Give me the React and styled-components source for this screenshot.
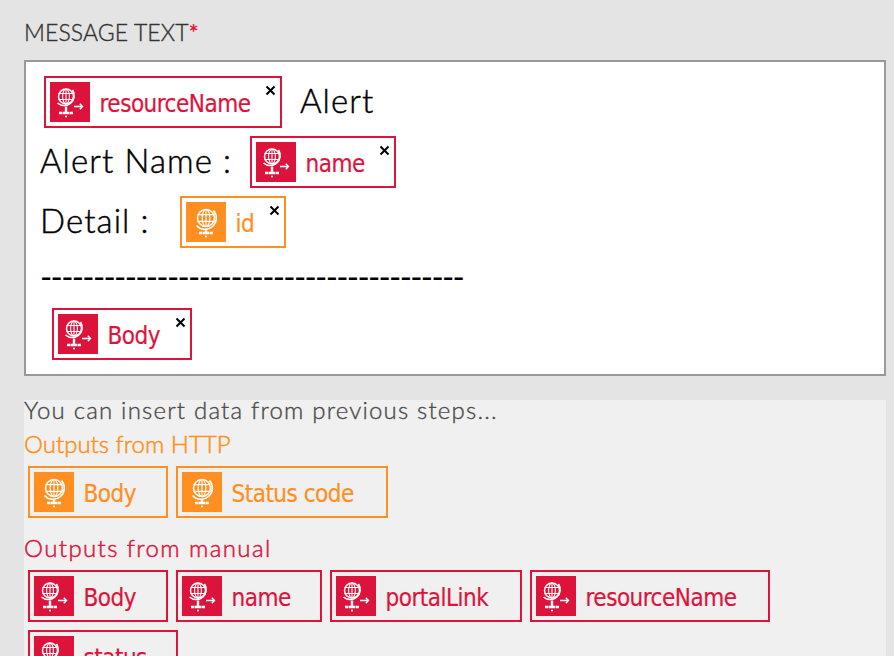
import React from "react";
import styled, { createGlobalStyle } from "styled-components";

const CRIMSON = "#dc143c";
const ORANGE = "#ff8f20";

const Global = createGlobalStyle`
  html, body { margin: 0; padding: 0; height: 100%; overflow: hidden; background: #e4e4e4; }
`;

const Page = styled.div`
  width: 894px;
  height: 656px;
  overflow: hidden;
  box-sizing: border-box;
  padding: 16px 8px 0 24px;
  font-family: "Lato", sans-serif;
`;

const FieldLabel = styled.div`
  font-size: 23px;
  line-height: 32px;
  height: 44px;
  color: #333;
  font-weight: 300;
  letter-spacing: 0.1px;
  -webkit-text-stroke: 0.35px #333;
  b { color: #f01030; font-weight: 700; -webkit-text-stroke: 0; }
`;

const Editor = styled.div`
  box-sizing: border-box;
  height: 316px;
  border: 2px solid #999;
  background: #fff;
  padding: 14px;
  display: flex;
  flex-direction: column;
  gap: 8px;
`;

const Line = styled.div`
  display: flex;
  align-items: center;
  height: 52px;
  flex: none;
  padding-left: ${(p) => p.$indent || 0}px;
  font-size: 33px;
  font-weight: 300;
  letter-spacing: 1.1px;
  color: #000;
  white-space: pre;
`;

const DashLine = styled.div`
  height: 44px;
  flex: none;
  line-height: 40px;
  font-size: 33px;
  font-weight: 400;
  letter-spacing: -1.68px;
  color: #000;
  white-space: pre;
  overflow: hidden;
`;

const LineText = styled.span`
  width: ${(p) => p.$w}px;
  margin-left: ${(p) => p.$left || 0}px;
  flex: none;
  position: relative;
  top: -2px;
  -webkit-text-stroke: 0.45px #000;
`;

const Panel = styled.div`
  margin-top: 24px;
  background: #f0f0f0;
  height: 300px;
`;

const Hint = styled.div`
  font-size: 24px;
  font-weight: 300;
  line-height: 20px;
  letter-spacing: 1.2px;
  color: #4a4a4a;
  -webkit-text-stroke: 0.35px #4a4a4a;
`;

const GroupTitle = styled.div`
  font-size: 24px;
  font-weight: 300;
  line-height: 32px;
  color: ${(p) => p.$color};
  margin-top: ${(p) => p.$top}px;
  letter-spacing: ${(p) => p.$spacing}px;
  -webkit-text-stroke: 0.5px ${(p) => p.$color};
`;

const Tokens = styled.div`
  display: flex;
  flex-wrap: wrap;
  gap: 8px;
  padding: 6px 0 0 4px;
`;

const TokenBox = styled.div`
  position: relative;
  box-sizing: border-box;
  height: 52px;
  flex: none;
  display: flex;
  align-items: center;
  gap: 10px;
  padding: 4px 0 4px 4px;
  width: ${(p) => p.$w}px;
  border: 2px solid ${(p) => p.$color};
  color: ${(p) => p.$color};
  font-family: "DejaVu Sans Condensed", "DejaVu Sans", sans-serif;
  font-stretch: condensed;
  font-size: 24px;
  letter-spacing: -0.5px;
  -webkit-text-stroke: 0.2px ${(p) => p.$color};
`;

const IconTile = styled.span`
  width: 40px;
  height: 40px;
  flex: none;
  display: block;
  background: ${(p) => p.$color};
  svg { display: block; }
`;

const TokenLabel = styled.span`
  white-space: nowrap;
  margin-top: 4px;
  margin-left: -0.5px;
`;

const Close = styled.svg`
  position: absolute;
  right: 4px;
  top: 7px;
  width: 11px;
  height: 11px;
`;

const GlobeIcon = ({ arrow }) => {
  const cx = arrow ? 16 : 20;
  const cy = arrow ? 14.5 : 16;
  const r = arrow ? 7.5 : 8.5;
  return (
    <svg width="40" height="40" viewBox="0 0 40 40" fill="none" stroke="#fff">
      <circle cx={cx} cy={cy} r={r} strokeWidth="1.5" />
      <ellipse cx={cx} cy={cy} rx={r * 0.45} ry={r} strokeWidth="1.1" />
      <path
        d={`M${cx} ${cy - r}v${2 * r}M${cx - r} ${cy - r * 0.4}h${2 * r}M${cx - r} ${cy + r * 0.4}h${2 * r}`}
        strokeWidth="1.1"
      />
      <path
        d={`M${cx - r - 1} ${cy + r - 1}A${r + 2.5} ${r + 2.5} 0 0 0 ${cx + r - 1} ${cy - r + 1}`}
        strokeWidth="1.6"
      />
      <path d={`M${cx} ${cy + r + 2.5}V31`} strokeWidth="2.4" />
      <path d={`M${cx - 7} 31h3.5M${cx - 3} 31h6M${cx + 3.5} 31h3.5`} strokeWidth="2.6" />
      <path d={`M${cx - 1} 34.5h2`} strokeWidth="1.4" />
      {arrow && <path d="M24 24.5h8.5M29.8 21.8l2.700 2.700-2.700 2.700" strokeWidth="1.4" />}
    </svg>
  );
};

const Token = ({ color, w, label, arrow = true, closable }) => (
  <TokenBox $color={color} $w={w}>
    <IconTile $color={color}>
      <GlobeIcon arrow={arrow} />
    </IconTile>
    <TokenLabel>{label}</TokenLabel>
    {closable && (
      <Close viewBox="0 0 11 11">
        <path d="M1.5 1.5l8 8M9.5 1.5l-8 8" stroke="#000" strokeWidth="2" />
      </Close>
    )}
  </TokenBox>
);

export default function App() {
  return (
    <Page>
      <Global />
      <FieldLabel>
        MESSAGE TEXT<b>*</b>
      </FieldLabel>
      <Editor>
        <Line $indent={4}>
          <Token color={CRIMSON} w={238} label="resourceName" closable />
          <LineText $w={100} $left={18}>Alert</LineText>
        </Line>
        <Line>
          <LineText $w={210}>Alert Name :</LineText>
          <Token color={CRIMSON} w={146} label="name" closable />
        </Line>
        <Line>
          <LineText $w={140}>Detail :</LineText>
          <Token color={ORANGE} w={106} label="id" arrow={false} closable />
        </Line>
        <DashLine>----------------------------------------</DashLine>
        <Line $indent={12}>
          <Token color={CRIMSON} w={140} label="Body" closable />
        </Line>
      </Editor>
      <Panel>
        <Hint>You can insert data from previous steps...</Hint>
        <GroupTitle $color={ORANGE} $top={8} $spacing={0}>Outputs from HTTP</GroupTitle>
        <Tokens>
          <Token color={ORANGE} w={140} label="Body" arrow={false} />
          <Token color={ORANGE} w={212} label="Status code" arrow={false} />
        </Tokens>
        <GroupTitle $color={CRIMSON} $top={14} $spacing={1.4}>Outputs from manual</GroupTitle>
        <Tokens>
          <Token color={CRIMSON} w={140} label="Body" />
          <Token color={CRIMSON} w={146} label="name" />
          <Token color={CRIMSON} w={192} label="portalLink" />
          <Token color={CRIMSON} w={240} label="resourceName" />
          <Token color={CRIMSON} w={150} label="status" />
        </Tokens>
      </Panel>
    </Page>
  );
}
